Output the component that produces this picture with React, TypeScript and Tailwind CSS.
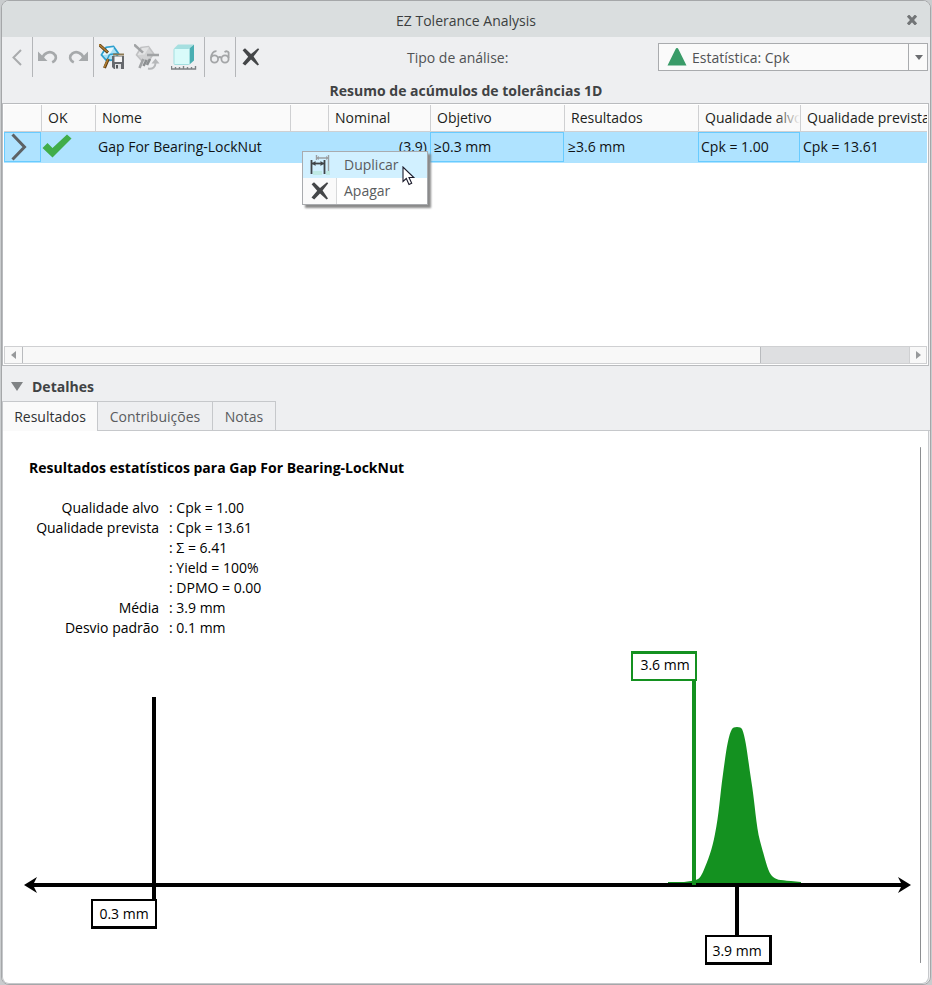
import React from "react";

const FONT =
  "font-['Segoe_UI','Open_Sans','Noto_Sans',sans-serif]";

function DeleteIcon() {
  return (
    <svg width="18" height="18" viewBox="0 0 18 18" aria-hidden="true">
      <path d="M0.6 2.2 L3 0.3 L9 6 L16 0.3 L17.2 1.2 L11.6 8.5 L17 16.4 L15.6 17.4 L9 11.4 L3.2 17.4 L0.5 15.6 L6.2 8.7 Z" fill="#444648" />
    </svg>
  );
}

function BackIcon() {
  return (
    <svg width="10" height="17" viewBox="0 0 10 17" fill="none" stroke="#a9abad" strokeWidth="2" aria-hidden="true">
      <path d="M9 1 L1.5 8.5 L9 16" />
    </svg>
  );
}

function UndoIcon() {
  return (
    <svg width="20" height="14" viewBox="0 0 20 14" aria-hidden="true">
      <path d="M0 1.5 L0 11 L9.5 11 Z" fill="#a6a9ab" />
      <path d="M4.5 8 C6 2.5 12 0.8 15.5 3.4 C19 6 18.6 10.2 14.2 12.4" fill="none" stroke="#a6a9ab" strokeWidth="2.6" />
    </svg>
  );
}

function RedoIcon() {
  return (
    <svg width="20" height="14" viewBox="0 0 20 14" aria-hidden="true">
      <path d="M20 1.5 L20 11 L10.5 11 Z" fill="#a6a9ab" />
      <path d="M15.5 8 C14 2.5 8 0.8 4.5 3.4 C1 6 1.4 10.2 5.8 12.4" fill="none" stroke="#a6a9ab" strokeWidth="2.6" />
    </svg>
  );
}

function SaveAnalysisIcon() {
  return (
    <svg width="26" height="26" viewBox="0 0 26 26" aria-hidden="true">
      <path d="M7 3.5 L14.5 2.5 L19.5 9.5 L15.5 16 L7.5 16.5 L2.5 11 Z" fill="#a9e0f5" stroke="#2d9fce" strokeWidth="1.8" />
      <path d="M8 4 L15 3.3 L10.5 10.5 L3.5 11 Z" fill="#e8f8fd" />
      <path d="M10.5 10.5 L19 9.5 M10.5 10.5 L8 16" stroke="#2d9fce" strokeWidth="1.5" />
      <path d="M0 0.5 L9 8.6 M9.3 15 L5.5 24" stroke="#5b3a12" strokeWidth="3" />
      <path d="M0 0.5 L8.5 8 M9 15 L5.3 23.5" stroke="#b07f33" strokeWidth="1.6" />
      <path d="M14 10.5 L25 10.5" stroke="#8d7a55" strokeWidth="2" />
      <path d="M13 12 H25 V25 H15 L13 23 Z" fill="#66696d" />
      <rect x="15.5" y="12.5" width="7.5" height="5.5" fill="#f5f5f6" />
      <rect x="16" y="20" width="6" height="5" fill="#dfe1e3" />
      <rect x="17" y="21" width="2" height="3.5" fill="#55585b" />
    </svg>
  );
}

function ReplaceAnalysisIcon() {
  return (
    <svg width="26" height="26" viewBox="0 0 26 26" aria-hidden="true">
      <path d="M7 3.5 L14.5 2.5 L19.5 9.5 L15.5 16 L7.5 16.5 L2.5 11 Z" fill="#d1d2d3" stroke="#c0c1c3" strokeWidth="1.6" />
      <path d="M8 4 L15 3.3 L10.5 10.5 L3.5 11 Z" fill="#e2e3e4" />
      <path d="M0 0.5 L9 8.6 M9.3 15 L5.5 24 M13 11 H25" stroke="#a1a3a5" strokeWidth="2.6" />
      <path d="M9.5 22 L12.5 16 M13 21 L16 15" fill="none" stroke="#8c8f91" strokeWidth="2.6" />
      <path d="M14 24.5 C19 25.5 21.5 22.5 21.5 19" fill="none" stroke="#b6b8ba" strokeWidth="2" />
      <path d="M17.5 19.5 L21.5 14.5 L25.5 19.5 Z" fill="#b6b8ba" />
    </svg>
  );
}

function CubeIcon() {
  return (
    <svg width="26" height="26" viewBox="0 0 26 26" aria-hidden="true">
      <path d="M3 4.5 L7 0.5 H22.5 L19 4.5 Z" fill="#a6dfe0" />
      <path d="M18.5 4.5 L23 0.5 V16.5 L18.5 20.5 Z" fill="#4aaeb2" />
      <rect x="3" y="4.5" width="15.5" height="16" rx="1" fill="#d9fbfa" stroke="#a3dfe0" />
      <path d="M0.5 22 V25 H24.5 V22 M4.5 23 V25 M8.5 23 V25 M12.5 22 V25 M16.5 23 V25 M20.5 23 V25" fill="none" stroke="#7d8184" strokeWidth="1.4" />
    </svg>
  );
}

function GlassesIcon() {
  return (
    <svg width="20" height="14" viewBox="0 0 20 14" fill="none" stroke="#a3a5a7" strokeWidth="1.8" aria-hidden="true">
      <circle cx="4.5" cy="9" r="3.6" />
      <circle cx="15" cy="9" r="3.6" />
      <path d="M8 8 Q9.8 6 11.5 8 M1 8 C1.5 4 3.5 1 6.5 1.2 M18.6 8 V2.5 Q17.5 0.3 14.5 2" />
    </svg>
  );
}

function DuplicateIcon() {
  return (
    <svg width="21" height="21" viewBox="0 0 21 21" aria-hidden="true">
      <path d="M6.5 0 V5 M18.5 0 V17 M7 3 H18" stroke="#9b9fa2" strokeWidth="1.4" fill="none" />
      <path d="M9 1 L6.5 3 L9 5 Z M16 1 L18.5 3 L16 5 Z" fill="#9b9fa2" />
      <path d="M3 16 H12 V20 H3 Z M16 16 H20 V20 H16 Z" fill="#bfe9e4" />
      <path d="M1.5 5 V19 M14.5 5 V19" stroke="#404448" strokeWidth="1.8" />
      <path d="M2 8.5 H14" stroke="#404448" strokeWidth="1.8" />
      <path d="M5.5 6 L2 8.5 L5.5 11 Z M10.5 6 L14 8.5 L10.5 11 Z" fill="#404448" />
    </svg>
  );
}

function Separator() {
  return <div className="w-px shrink-0 self-stretch bg-[#b4b6b9]" />;
}

function ToolButton({ label, width, children }: { label: string; width: string; children: React.ReactNode }) {
  return (
    <button type="button" aria-label={label} className={`flex h-10 shrink-0 items-center justify-center ${width}`}>
      {children}
    </button>
  );
}

function Toolbar() {
  return (
    <div className="flex h-10 items-center pr-[2px]">
      <ToolButton label="Voltar" width="w-[30px]"><BackIcon /></ToolButton>
      <Separator />
      <ToolButton label="Desfazer" width="w-[30px]"><UndoIcon /></ToolButton>
      <ToolButton label="Refazer" width="w-[30px]"><RedoIcon /></ToolButton>
      <Separator />
      <ToolButton label="Salvar análise" width="w-9"><SaveAnalysisIcon /></ToolButton>
      <ToolButton label="Substituir análise" width="w-[34px]"><ReplaceAnalysisIcon /></ToolButton>
      <ToolButton label="Dimensões" width="w-10"><CubeIcon /></ToolButton>
      <Separator />
      <ToolButton label="Visualizar" width="w-[30px]"><GlassesIcon /></ToolButton>
      <Separator />
      <ToolButton label="Apagar" width="w-[30px]"><DeleteIcon /></ToolButton>
      <label htmlFor="analysis" className="ml-auto w-[251px] pt-px text-[#505254]">Tipo de análise:</label>
      <div className="relative w-[270px]">
        <select id="analysis" className="block h-7 w-full appearance-none border border-[#a9abae] bg-[#fafafa] pt-px pl-[33px] text-[#505254]">
          <option>Estatística: Cpk</option>
        </select>
        <svg className="pointer-events-none absolute top-1 left-[9px]" width="20" height="19" viewBox="0 0 20 19" aria-hidden="true">
          <path d="M10 1 Q11 1 11.6 2.4 L19.5 18.5 H0.5 L8.4 2.4 Q9 1 10 1 Z" fill="#399b68" />
        </svg>
        <div className="pointer-events-none absolute top-0 right-0 flex h-7 w-5 items-center justify-center border-l border-[#a9abae]">
          <svg width="8" height="5" viewBox="0 0 8 5" aria-hidden="true"><path d="M0 0 H8 L4 5 Z" fill="#6b6d70" /></svg>
        </div>
      </div>
    </div>
  );
}

const HEADERS = ["", "OK", "Nome", "", "Nominal", "Objetivo", "Resultados", "Qualidade alvo", "Qualidade prevista"];

function SummaryTable() {
  return (
    <table className="w-[940px] table-fixed border-collapse text-[#1c1e20]">
      <colgroup>
        <col className="w-[37px]" />
        <col className="w-[54px]" />
        <col className="w-[195px]" />
        <col className="w-[38px]" />
        <col className="w-[102px]" />
        <col className="w-[134px]" />
        <col className="w-[134px]" />
        <col className="w-[102px]" />
        <col />
      </colgroup>
      <thead>
        <tr className="h-[26px] bg-[#fafafa]">
          {HEADERS.map((h, i) => (
            <th key={i} scope="col" className={`relative overflow-hidden border-b border-[#cfd0d2] p-0 text-left font-normal whitespace-nowrap ${i > 0 ? "pl-[7px]" : ""}`}>
              {i > 0 && <span className="absolute inset-y-0 left-0 w-px bg-[#cfd0d2]" />}
              {h}
              {i === 7 && <span className="absolute inset-y-0 right-0 w-6 bg-linear-to-l from-[#fafafa] to-transparent" />}
            </th>
          ))}
        </tr>
      </thead>
      <tbody>
        <tr className="h-8 bg-[#afe3ff] align-top leading-[30px] text-[#101214]">
          <td className="p-0">
            <div className="flex h-[30px] items-center border border-[#68cbff] pl-[6px]">
              <svg width="17" height="28" viewBox="0 0 17 28" fill="none" stroke="#5d6265" strokeWidth="3" aria-hidden="true"><path d="M1.5 1.5 L13.5 14 L1.5 26.5" /></svg>
            </div>
          </td>
          <td className="p-0 pt-[2px] pl-px">
            <svg width="30" height="24" viewBox="0 0 30 24" role="img" aria-label="OK"><path d="M0.5 14 L5.5 9 L10.5 14 L25 0.5 L29.5 4.5 L10.5 23.5 Z" fill="#41ad49" /></svg>
          </td>
          <td className="p-0 pl-[3px]">Gap For Bearing-LockNut</td>
          <td className="p-0" />
          <td className="p-0 pr-[3px] text-right">(3.9)</td>
          <td className="p-0"><div className="h-[30px] border border-[#68cbff] pl-[3px] leading-7">≥0.3 mm</div></td>
          <td className="p-0 pl-1">≥3.6 mm</td>
          <td className="p-0"><div className="h-[30px] border border-[#68cbff] pl-[2px] leading-7">Cpk = 1.00</div></td>
          <td className="p-0 pl-[3px]">Cpk = 13.61</td>
        </tr>
      </tbody>
    </table>
  );
}

function ContextMenu() {
  return (
    <div role="menu" className="absolute top-[47px] left-[299px] w-[126px] border border-[#a9abae] bg-white text-[#5a5c5e] shadow-[3px_3px_2px_#8a8a8a]">
      <button type="button" role="menuitem" className="flex h-[26px] w-full items-center bg-[#d1f0ff]">
        <span className="flex w-[34px] justify-center"><DuplicateIcon /></span>
        <span className="pl-[7px]">Duplicar</span>
      </button>
      <button type="button" role="menuitem" className="flex h-[26px] w-full items-center">
        <span className="flex h-full w-[34px] items-center justify-center border-r border-[#d8d9da] bg-[#fafafa]"><DeleteIcon /></span>
        <span className="pl-[7px]">Apagar</span>
      </button>
      <svg className="absolute top-[14px] left-[99px]" width="14" height="20" viewBox="0 0 14 20" aria-hidden="true">
        <path d="M1 1 V15.5 L4.3 12.5 L7 18.5 L9.7 17.3 L7 11.5 H11.8 Z" fill="#fff" stroke="#1c1c2c" strokeWidth="1.1" />
      </svg>
    </div>
  );
}

function HorizontalScroll() {
  return (
    <div className="mx-px mb-px flex h-[18px] border border-[#cfd0d2] bg-[#dedfe1]">
      <button type="button" aria-label="Rolar para a esquerda" className="flex w-[17px] items-center justify-center bg-[#f8f8f8]">
        <svg width="5" height="8" viewBox="0 0 5 8" aria-hidden="true"><path d="M5 0 V8 L0 4 Z" fill="#97999b" /></svg>
      </button>
      <div className="flex-1">
        <div className="h-full w-5/6 border-x border-[#b9bbbe] bg-[#f8f8f8]" />
      </div>
      <button type="button" aria-label="Rolar para a direita" className="flex w-[17px] items-center justify-center border-l border-[#cfd0d2] bg-[#f8f8f8]">
        <svg width="5" height="8" viewBox="0 0 5 8" aria-hidden="true"><path d="M0 0 V8 L5 4 Z" fill="#97999b" /></svg>
      </button>
    </div>
  );
}

const STATS: [string, string][] = [
  ["Qualidade alvo", "Cpk = 1.00"],
  ["Qualidade prevista", "Cpk = 13.61"],
  ["", "Σ = 6.41"],
  ["", "Yield = 100%"],
  ["", "DPMO = 0.00"],
  ["Média", "3.9 mm"],
  ["Desvio padrão", "0.1 mm"],
];

function DistributionChart() {
  return (
    <svg viewBox="3 638 917 332" className="block w-full text-[14px]" role="img" aria-label="Distribuição">
      <path d="M668 883 V882 H684 L691 881 C699 880 700 878 703 872 C708 860 712 850 715 834 C719 815 720 795 723 774 C726 752 728 736 732 729 Q733 727 737 727 Q741 727 742 729 C746 738 748 760 751 779 C755 803 756 826 760 841 C765 859 768 872 772 876 C776 880 779 880 791 881 L801 882 V883 Z" fill="#149120" />
      <rect x="30" y="883" width="874" height="4" />
      <path d="M24 885 L37 877 L33 885 L37 893 Z M911 885 L898 877 L902 885 L898 893 Z" />
      <rect x="152" y="697" width="4" height="203" />
      <rect x="735" y="886" width="4" height="50" />
      <rect x="692" y="680" width="4" height="205" fill="#149120" />
      <path d="M91 899 H157 V929 H91 Z" />
      <path d="M93 901 H155 V926 H93 Z" fill="#fff" />
      <path d="M705 935 H772 V965 H705 Z" />
      <path d="M707 937 H769 V962 H707 Z" fill="#fff" />
      <path d="M631 651 H697 V681 H631 Z" fill="#149120" />
      <path d="M633 654 H695 V679 H633 Z" fill="#fff" />
      <text x="124" y="919" textAnchor="middle">0.3 mm</text>
      <text x="737" y="956" textAnchor="middle">3.9 mm</text>
      <text x="665" y="670" textAnchor="middle">3.6 mm</text>
    </svg>
  );
}

export default function App() {
  return (
    <div className={`flex min-h-screen flex-col bg-[#c9ccce] px-px text-[14px] leading-5 ${FONT}`}>
      <main className="flex flex-1 flex-col rounded-[8px] border border-[#a5a7a9] bg-[#eeeff1]">
        <header className="flex h-9 items-center rounded-t-[7px] bg-[#dadedf] pt-1 pl-9">
          <h1 className="flex-1 text-center text-[#3c3e40]">EZ Tolerance Analysis</h1>
          <button type="button" aria-label="Fechar" className="flex h-9 w-9 items-center justify-center pb-[2px]">
            <svg width="10" height="10" viewBox="0 0 10 10" stroke="#727577" strokeWidth="3" aria-hidden="true"><path d="M1 0.5 L9 9.5 M9 0.5 L1 9.5" /></svg>
          </button>
        </header>
        <Toolbar />
        <h2 className="pt-1 pb-[2px] text-center font-bold text-[#404244]">Resumo de acúmulos de tolerâncias 1D</h2>

        <section className="relative mr-px flex h-[263px] flex-col border border-[#b9bbbe] bg-white">
          <div className="mx-px mt-px flex-1 overflow-hidden">
            <SummaryTable />
          </div>
          <HorizontalScroll />
          <ContextMenu />
        </section>

        <button type="button" className="flex h-[35px] items-center gap-[9px] pt-[6px] pl-[9px] font-bold text-[#404244]">
          <svg width="12" height="9" viewBox="0 0 12 9" aria-hidden="true"><path d="M0 0 H12 L6 9 Z" fill="#808385" /></svg>
          Detalhes
        </button>

        <div role="tablist" className="flex h-[30px] border-b border-[#c6c8cb] text-[#5a5c5e]">
          <button type="button" role="tab" aria-selected="true" className="h-[30px] w-24 border-x border-t border-[#c6c8cb] bg-[#fafafa] pt-px text-[#303234]">Resultados</button>
          <button type="button" role="tab" aria-selected="false" className="w-[115px] border-t border-r border-[#c6c8cb] pt-[2px]">Contribuições</button>
          <button type="button" role="tab" aria-selected="false" className="w-[63px] border-t border-r border-[#c6c8cb] pt-[2px]">Notas</button>
        </div>

        <section role="tabpanel" className="mr-px flex flex-1 rounded-b-[7px] border-x border-b border-[#c6c8cb] bg-white pr-[7px] text-black">
          <div className="min-w-0 flex-1 pt-[27px]">
            <h3 className="pl-[26px] font-bold">Resultados estatísticos para Gap For Bearing-LockNut</h3>
            <table className="mt-5">
              <tbody>
                {STATS.map(([name, value]) => (
                  <tr key={value}>
                    <th scope="row" className="h-5 w-[156px] p-0 text-right font-normal">{name}</th>
                    <td className="p-0 pl-[10px]">: {value}</td>
                  </tr>
                ))}
              </tbody>
            </table>
            <DistributionChart />
          </div>
          <div className="mt-4 mb-5 w-px rounded-full bg-[#8c8e91]" />
        </section>
      </main>
    </div>
  );
}
